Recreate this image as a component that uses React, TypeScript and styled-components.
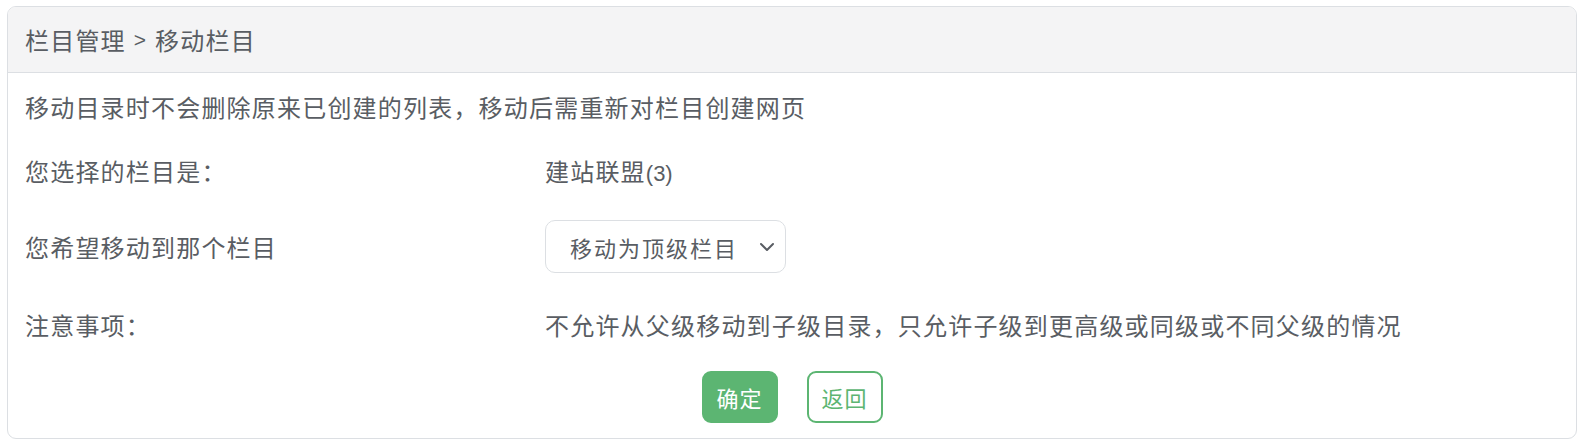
import React, { useState } from "react";
import styled, { createGlobalStyle } from "styled-components";

const GlobalStyle = createGlobalStyle`
  html, body {
    margin: 0;
    padding: 0;
    background: #fff;
  }
  body {
    font-family: "Liberation Sans", "Noto Sans CJK SC", sans-serif;
    color: #595d63;
  }
`;

const Page = styled.div`
  padding: 6px 7px 10px;
  box-sizing: border-box;
  width: 1584px;
`;

const Card = styled.div`
  border: 1px solid #dcdfe3;
  border-radius: 9px;
  overflow: hidden;
  background: #fff;
`;

const CardHeader = styled.div`
  height: 65px;
  display: flex;
  align-items: center;
  padding: 0 17px;
  background: #f4f4f5;
  border-bottom: 1px solid #dcdfe3;
  font-size: 24px;
  letter-spacing: 1.2px;
  color: #595d63;
`;

const Sep = styled.span`
  font-family: "Liberation Sans", sans-serif;
  font-size: 21px;
  letter-spacing: 0;
  margin: 0 9px 0 8px;
`;

const Row = styled.div<{ $h: number }>`
  height: ${(p) => p.$h}px;
  display: grid;
  grid-template-columns: 520px 1fr;
  align-items: center;
  padding: 0 17px;
  font-size: 24px;
  letter-spacing: 1.2px;
`;

const Notice = styled.div<{ $h: number }>`
  height: ${(p) => p.$h}px;
  display: flex;
  align-items: center;
  padding: 0 17px;
  font-size: 24px;
  letter-spacing: 1.2px;
`;

const Num = styled.span`
  font-size: 22px;
  letter-spacing: 0;
`;

const SelectBox = styled.label`
  position: relative;
  width: 241px;
  height: 53px;
  box-sizing: border-box;
  border: 1px solid #dcdfe3;
  border-radius: 10px;
  display: flex;
  align-items: center;
  padding: 0 0 0 24px;
  font-size: 22px;
  letter-spacing: 2px;
  color: #595d63;
  cursor: pointer;

  svg {
    position: absolute;
    right: 10px;
    top: 50%;
    transform: translateY(-50%);
  }
`;

const HiddenSelect = styled.select`
  position: absolute;
  inset: 0;
  opacity: 0;
  cursor: pointer;
`;

const Actions = styled.div`
  display: flex;
  justify-content: center;
  gap: 29px;
  padding: 15px 0;
`;

const Button = styled.button<{ $outline?: boolean }>`
  width: 76px;
  height: 52px;
  box-sizing: border-box;
  border-radius: 9px;
  font-family: "Liberation Sans", "Noto Sans CJK SC", sans-serif;
  font-size: 22px;
  letter-spacing: 1px;
  cursor: pointer;
  border: 2px solid #5cb572;
  background: ${(p) => (p.$outline ? "#fff" : "#5cb572")};
  color: ${(p) => (p.$outline ? "#5cb572" : "#fff")};
`;

const Chevron = () => (
  <svg width="16" height="10" viewBox="0 0 16 10" fill="none">
    <path d="M2 2l6 6 6-6" stroke="#595d63" strokeWidth="2" strokeLinecap="round" strokeLinejoin="round" />
  </svg>
);

const options = ["移动为顶级栏目", "建站联盟", "新闻中心"];

export default function App() {
  const [target, setTarget] = useState(options[0]);

  return (
    <>
      <GlobalStyle />
      <Page>
        <Card>
          <CardHeader>
            栏目管理<Sep>&gt;</Sep>移动栏目
          </CardHeader>
          <Notice $h={67}>移动目录时不会删除原来已创建的列表，移动后需重新对栏目创建网页</Notice>
          <Row $h={61}>
            <span>您选择的栏目是：</span>
            <span>
              建站联盟<Num>(3)</Num>
            </span>
          </Row>
          <Row $h={91}>
            <span>您希望移动到那个栏目</span>
            <SelectBox>
              {target}
              <Chevron />
              <HiddenSelect value={target} onChange={(e) => setTarget(e.target.value)}>
                {options.map((o) => (
                  <option key={o}>{o}</option>
                ))}
              </HiddenSelect>
            </SelectBox>
          </Row>
          <Row $h={64}>
            <span>注意事项：</span>
            <span>不允许从父级移动到子级目录，只允许子级到更高级或同级或不同父级的情况</span>
          </Row>
          <Actions>
            <Button>确定</Button>
            <Button $outline>返回</Button>
          </Actions>
        </Card>
      </Page>
    </>
  );
}
